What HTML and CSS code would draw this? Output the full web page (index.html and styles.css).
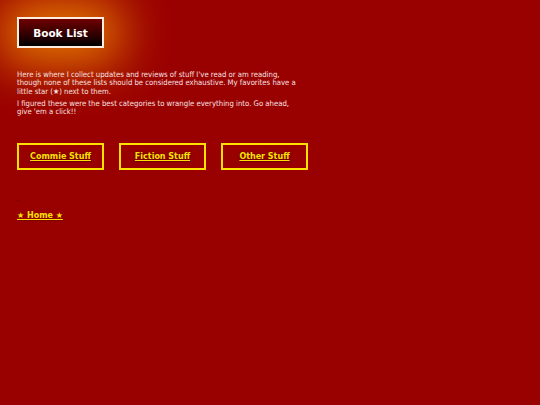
FILE: index.html
```html
<!DOCTYPE html>
<html>
<head>
<meta charset="utf-8">
<link rel="stylesheet" href="styles.css">
</head>
<body>
<div class="page">
  <h1 class="title">Book List</h1>
  <div class="intro">
    <p>Here is where I collect updates and reviews of stuff I've read or am reading, though none of these lists should be considered exhaustive. My favorites have a little star (★) next to them.</p>
    <p>I figured these were the best categories to wrangle everything into. Go ahead, give 'em a click!!</p>
  </div>
  <nav class="cats">
    <a class="cat" href="#">Commie Stuff</a>
    <a class="cat" href="#">Fiction Stuff</a>
    <a class="cat" href="#">Other Stuff</a>
  </nav>
  <div class="dot"></div>
  <a class="home" href="#">★ Home ★</a>
</div>
</body>
</html>
```
FILE: styles.css
```css
html, body {
  margin: 0;
  padding: 0;
  height: 100%;
}
body {
  background-color: #990000;
  font-family: "DejaVu Sans", Verdana, sans-serif;
  color: #f8e0e0;
}
.page {
  padding: 17px;
  display: flex;
  flex-direction: column;
  align-items: flex-start;
}
.title {
  margin: 0;
  width: 83px;
  height: 27px;
  border: 2px solid #ffeedd;
  background: linear-gradient(#700000, #000000);
  color: #ffffff;
  font-size: 10.5px;
  font-weight: bold;
  display: flex;
  align-items: center;
  justify-content: center;
  box-shadow: 0 0 50px 16px rgba(240,140,0,0.9);
}
.intro {
  margin-top: 23px;
  width: 285px;
  font-family: "DejaVu Sans Condensed", "DejaVu Sans", sans-serif;
  font-size: 7.7px;
  line-height: 8.3px;
}
.intro p {
  margin: 0 0 4px 0;
}
.cats {
  margin-top: 23px;
  display: flex;
  gap: 15px;
}
.cat {
  width: 83px;
  height: 23px;
  border: 2px solid #ffe000;
  color: #ffe000;
  font-size: 8px;
  font-weight: bold;
  text-decoration: underline;
  text-shadow: 1px 1px 1px #7a0000, 0 0 2px #500000;
  display: flex;
  align-items: center;
  justify-content: center;
}
.dot {
  margin-top: 30px;
  width: 1px;
  height: 1px;
  background: #550000;
}
.home {
  margin-top: 10px;
  color: #ffe000;
  font-size: 8px;
  font-weight: bold;
  text-decoration: underline;
  text-shadow: 1px 1px 1px #7a0000;
}
```
